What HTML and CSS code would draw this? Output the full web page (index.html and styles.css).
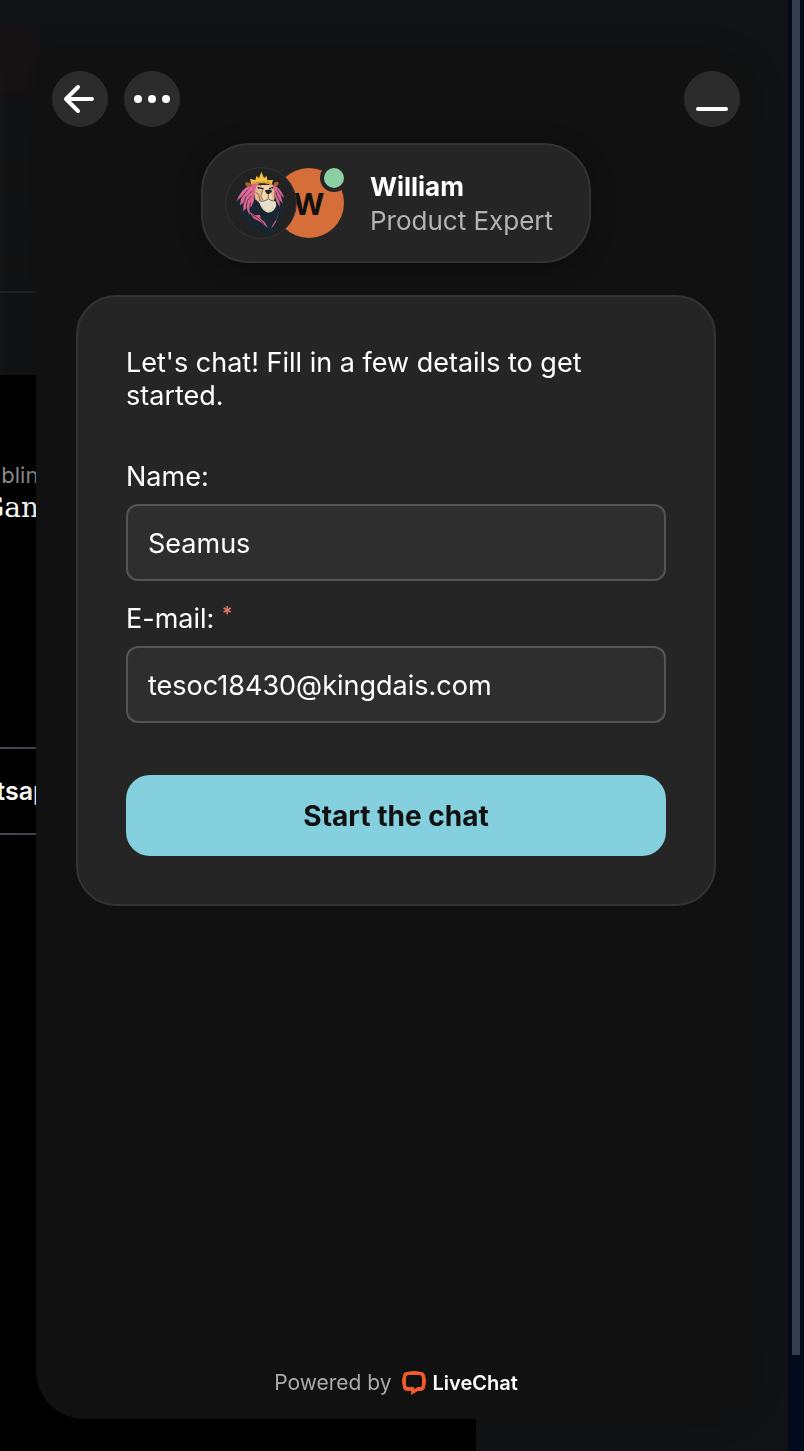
FILE: index.html
```html
<!DOCTYPE html>
<html lang="en">

<head>
    <meta charset="UTF-8">
    <meta name="viewport" content="width=device-width, initial-scale=1.0">
    <title>Chat</title>
    <link rel="stylesheet" href="styles.css">
</head>

<body>
    <!-- Page behind the chat -->
    <div class="page">
        <div class="hero"></div>
        <div class="content">
            <p class="tag">mblin</p>
            <p class="headline">Gan</p>
            <p class="contact">atsap</p>
        </div>
    </div>
    <div class="scrollbar">
        <div class="thumb"></div>
    </div>

    <!-- Chat widget -->
    <main class="chat">
        <header class="toolbar">
            <button class="round-btn" type="button" aria-label="Back">
                <svg width="56" height="56" viewBox="0 0 56 56">
                    <path d="M26 16 L14 28 L26 40 M14 28 H40" fill="none" stroke="#fff" stroke-width="4" stroke-linecap="round" stroke-linejoin="round"/>
                </svg>
            </button>
            <button class="round-btn" type="button" aria-label="Menu">
                <svg width="56" height="56" viewBox="0 0 56 56" fill="#fff">
                    <circle cx="14" cy="28" r="4"/>
                    <circle cx="28" cy="28" r="4"/>
                    <circle cx="42" cy="28" r="4"/>
                </svg>
            </button>
            <button class="round-btn minimize" type="button" aria-label="Minimize">
                <svg width="56" height="56" viewBox="0 0 56 56">
                    <path d="M14 38 H42" stroke="#fff" stroke-width="4" stroke-linecap="round"/>
                </svg>
            </button>
        </header>

        <div class="agent">
            <div class="avatars">
                <svg class="lion" viewBox="-15 -3 216 216">
                    <circle cx="93" cy="105" r="106" fill="#222223" stroke="#343434" stroke-width="3"/>
                    <!-- mane shadow -->
                    <path d="M50 46 L30 66 L18 98 L28 106 L20 126 L34 132 L34 150 L50 156 L62 174 L90 184 L118 208 L126 190 L144 168 L154 138 L168 126 L162 108 L164 88 L150 62 L134 46 L94 40 Z" fill="#172631"/>
                    <!-- mane -->
                    <path d="M88 46 C58 46 32 64 20 100 L34 86 L30 112 L40 104 L40 130 L50 120 L58 142 L60 120 L66 112 L72 98 L74 74 L82 56 Z" fill="#dc6390"/>
                    <path d="M114 46 C138 50 156 66 162 90 L152 80 L158 106 L148 96 L150 116 L140 102 L134 82 L130 62 Z" fill="#dc6390"/>
                    <path d="M56 130 L72 152 L92 162 L114 180 L104 162 L92 152 L90 140 L74 142 Z" fill="#dc5a89"/>
                    <path d="M146 126 L142 150 L128 170 L124 182 L138 162 Z" fill="#dc5a89"/>
                    <path d="M32 92 L52 66 M38 114 L48 86 L66 68 M48 122 L52 98 L64 84 M58 126 L62 104 M140 60 L152 82 M136 70 L148 98 M66 140 L86 152 L102 168" fill="none" stroke="#172631" stroke-width="2"/>
                    <path d="M38 76 L54 58 M50 84 L66 60 M132 54 L146 66" fill="none" stroke="#f58bae" stroke-width="2"/>
                    <!-- ears -->
                    <path d="M62 56 C44 58 42 44 50 42 C58 42 64 48 66 52 Z M130 50 C132 42 142 38 146 44 C146 52 140 56 132 56 Z" fill="#a0602a"/>
                    <!-- face -->
                    <path d="M80 52 L126 50 L132 66 L134 90 L130 104 L90 106 L76 94 L73 76 Z" fill="#eab98b"/>
                    <path d="M94 52 H120 L116 66 L124 80 L128 96 L96 98 L88 82 L100 66 Z" fill="#f6d4a5"/>
                    <path d="M82 56 L102 61 L99 65 L84 62 Z M116 61 L130 56 L129 63 L119 65 Z" fill="#172631"/>
                    <path d="M86 61 L98 65 L90 67 Z M120 63 L128 60 L126 65 Z" fill="#b6e4ec"/>
                    <path d="M104 67 Q114 63 125 67 L125 72 L116 79 L110 77 Z" fill="#172631"/>
                    <path d="M115 78 V92 M98 68 L92 84 L98 96 M76 72 L86 80 L90 96" fill="none" stroke="#4b3a38" stroke-width="2"/>
                    <!-- beard -->
                    <path d="M87 100 C94 96 104 96 115 91 C124 96 134 96 137 102 L139 112 C136 124 128 132 116 134 C102 132 92 120 87 100 Z" fill="#e7dfc9"/>
                    <path d="M88 98 C98 102 108 98 115 92 C122 98 130 100 136 98" fill="none" stroke="#172631" stroke-width="2"/>
                    <path d="M95 116 L99 121 M104 124 L106 130 M119 126 L118 132 M130 118 L127 124" stroke="#b8aa92" stroke-width="2"/>
                    <!-- crown -->
                    <path d="M64 50 L60 32 L76 37 L79 24 L87 30 L94 11 L102 30 L110 24 L112 37 L129 36 L125 50 C108 44 82 44 64 50 Z" fill="#f3c13d"/>
                    <path d="M67 46 C84 41 106 41 123 46" fill="none" stroke="#cb8c25" stroke-width="3"/>
                </svg>
                <div class="initial">W</div>
                <span class="status"></span>
            </div>
            <div class="agent-info">
                <div class="agent-name">William</div>
                <div class="agent-role">Product Expert</div>
            </div>
        </div>

        <form class="card" onsubmit="return false">
            <p class="intro">Let's chat! Fill in a few details to get started.</p>
            <div class="field">
                <label for="name">Name:</label>
                <input id="name" type="text" value="Seamus">
            </div>
            <div class="field">
                <label for="email">E-mail: <span class="required">*</span></label>
                <input id="email" type="email" value="tesoc18430@kingdais.com">
            </div>
            <button class="start-btn" type="submit">Start the chat</button>
        </form>

        <footer class="footer">
            <span>Powered by</span>
            <a class="brand" href="#">
                <svg width="24" height="24" viewBox="0 0 24 24">
                    <path fill="#f05a28" fill-rule="evenodd" d="M5 1 Q12 -1 19 1 Q23 1 23 5 Q25 10 23 16 Q23 19 19 20 H16 L9 24 V20 H5 Q1 19 1 16 Q-1 10 1 5 Q1 1 5 1 Z M6 4 Q4 5 4 7 V13 Q4 16 6 16 H12 V18 L16 16 H18 Q20 16 20 13 V7 Q20 5 18 4 Z"/>
                </svg>
                LiveChat
            </a>
        </footer>
    </main>
</body>

</html>
```
FILE: styles.css
```css
* {
    box-sizing: border-box;
}

body {
    margin: 0;
    min-height: 100vh;
    display: flex;
    background: #111314;
    color: #fff;
    font-family: Inter, "Liberation Sans", sans-serif;
    overflow: hidden;
}

p {
    margin: 0;
}

button,
input {
    font: inherit;
}

/* page behind */
.page {
    flex: 1;
    display: flex;
    flex-direction: column;
}

.hero {
    height: 375px;
    background:
        linear-gradient(#20202a, #20202a) 0 291px / 40px 2px no-repeat,
        linear-gradient(#111314 22px, #161314 34px, #161314 85px, #111314 105px, #131314 180px, #111314 220px, #131314 265px, #111314 300px) 0 0 / 40px 100% no-repeat,
        #111314;
}

.content {
    flex: 1;
    width: 476px;
    padding-top: 84px;
    background: #000;
    overflow: hidden;
    white-space: nowrap;
}

.tag,
.headline,
.contact {
    margin-left: -18px;
}

.tag {
    color: #8b8b8b;
    font-size: 22px;
    line-height: 32px;
}

.headline {
    font-family: "DejaVu Serif", serif;
    font-size: 28px;
    line-height: 34px;
}

.contact {
    margin-top: 222px;
    border-top: 2px solid #454751;
    border-bottom: 2px solid #454751;
    font-size: 25px;
    font-weight: 600;
    line-height: 84px;
}

.scrollbar {
    width: 16px;
    padding: 0 4px;
    background: #030a1b;
}

.thumb {
    height: calc(100vh - 96px);
    background: #373e4b;
}

/* chat widget */
.chat {
    position: fixed;
    top: 55px;
    right: 48px;
    bottom: 32px;
    left: 36px;
    display: flex;
    flex-direction: column;
    background: #111;
    border-radius: 0 48px 48px 48px;
    box-shadow: 0 0 32px rgba(0, 0, 0, 0.2);
}

.toolbar {
    display: flex;
    gap: 16px;
    padding: 16px;
}

.round-btn {
    width: 56px;
    height: 56px;
    padding: 0;
    border: 0;
    border-radius: 50%;
    background: #2c2c2c;
    cursor: pointer;
}

.round-btn svg {
    display: block;
}

.minimize {
    margin-left: auto;
}

.agent {
    align-self: center;
    display: flex;
    align-items: center;
    gap: 26px;
    height: 120px;
    padding: 0 36px 0 22px;
    border: 2px solid #333;
    border-radius: 48px;
    background: #252525;
    box-shadow: 0 4px 24px rgba(0, 0, 0, 0.3);
}

.avatars {
    position: relative;
    display: flex;
    align-items: center;
}

.lion {
    position: relative;
    z-index: 1;
    width: 72px;
    height: 72px;
}

.initial {
    width: 70px;
    height: 70px;
    margin-left: -23px;
    border-radius: 50%;
    background: #d66e39;
    color: #111;
    font-size: 30px;
    font-weight: 700;
    line-height: 72px;
    text-align: center;
}

.status {
    position: absolute;
    top: -3px;
    right: -4px;
    width: 28px;
    height: 28px;
    border: 4px solid #252525;
    border-radius: 50%;
    background: #8dcfa4;
}

.agent-info {
    padding-top: 2px;
    font-size: 26px;
    line-height: 34px;
}

.agent-name {
    font-weight: 700;
}

.agent-role {
    color: #b3b3b3;
}

.card {
    margin: 32px 40px;
    padding: 49px 48px 48px;
    border: 2px solid #333;
    border-radius: 40px;
    background: #252525;
    font-size: 27px;
    line-height: 33px;
}

.intro {
    margin-bottom: 48px;
}

.field {
    margin-bottom: 21px;
}

.field label {
    display: block;
    margin-bottom: 11px;
}

.required {
    color: #f0806c;
    font-size: 20px;
    font-weight: 500;
    line-height: 24px;
    vertical-align: top;
}

.field input {
    display: block;
    width: 100%;
    height: 77px;
    padding: 2px 20px 0;
    border: 2px solid #555;
    border-radius: 12px;
    outline: none;
    background: #2e2e2e;
    color: #fff;
}

.start-btn {
    width: 100%;
    height: 81px;
    margin-top: 52px;
    padding: 2px 0 0;
    display: block;
    border: 0;
    border-radius: 24px;
    background: #84d0de;
    color: #111;
    font-size: 28px;
    font-weight: 700;
    cursor: pointer;
}

.footer {
    display: flex;
    justify-content: center;
    align-items: center;
    gap: 10px;
    margin-top: auto;
    padding-bottom: 21px;
    color: #aaa;
    font-size: 21px;
    line-height: 30px;
}

.brand {
    display: flex;
    align-items: center;
    gap: 7px;
    color: #fff;
    font-size: 20px;
    font-weight: 600;
    text-decoration: none;
}
```
